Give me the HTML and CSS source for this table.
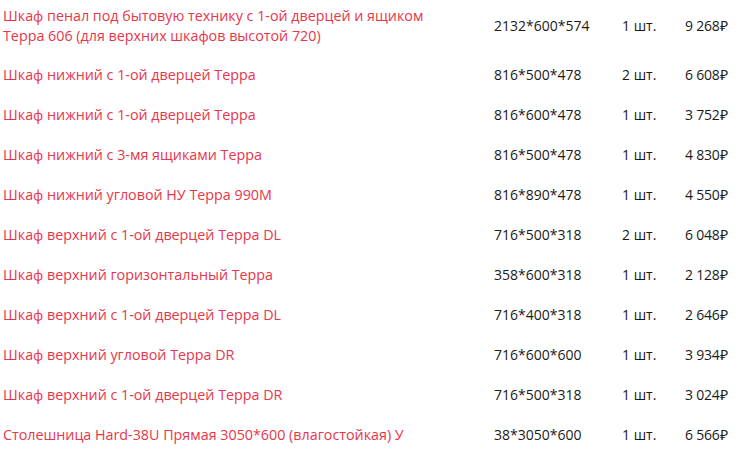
FILE: index.html
```html
<!DOCTYPE html>
<html lang="ru">
<head>
<meta charset="utf-8">
<link rel="stylesheet" href="styles.css">
</head>
<body>
<div class="list">
  <div class="row first">
    <div class="name">Шкаф пенал под бытовую технику с 1-ой дверцей и ящиком Терра 606 (для верхних шкафов высотой 720)</div>
    <div class="dims">2132*600*574</div><div class="qty">1 шт.</div><div class="price">9 268₽</div>
  </div>
  <div class="row">
    <div class="name">Шкаф нижний с 1-ой дверцей Терра</div>
    <div class="dims">816*500*478</div><div class="qty">2 шт.</div><div class="price">6 608₽</div>
  </div>
  <div class="row">
    <div class="name">Шкаф нижний с 1-ой дверцей Терра</div>
    <div class="dims">816*600*478</div><div class="qty">1 шт.</div><div class="price">3 752₽</div>
  </div>
  <div class="row">
    <div class="name">Шкаф нижний с 3-мя ящиками Терра</div>
    <div class="dims">816*500*478</div><div class="qty">1 шт.</div><div class="price">4 830₽</div>
  </div>
  <div class="row">
    <div class="name">Шкаф нижний угловой НУ Терра 990М</div>
    <div class="dims">816*890*478</div><div class="qty">1 шт.</div><div class="price">4 550₽</div>
  </div>
  <div class="row">
    <div class="name">Шкаф верхний с 1-ой дверцей Терра DL</div>
    <div class="dims">716*500*318</div><div class="qty">2 шт.</div><div class="price">6 048₽</div>
  </div>
  <div class="row">
    <div class="name">Шкаф верхний горизонтальный Терра</div>
    <div class="dims">358*600*318</div><div class="qty">1 шт.</div><div class="price">2 128₽</div>
  </div>
  <div class="row">
    <div class="name">Шкаф верхний с 1-ой дверцей Терра DL</div>
    <div class="dims">716*400*318</div><div class="qty">1 шт.</div><div class="price">2 646₽</div>
  </div>
  <div class="row">
    <div class="name">Шкаф верхний угловой Терра DR</div>
    <div class="dims">716*600*600</div><div class="qty">1 шт.</div><div class="price">3 934₽</div>
  </div>
  <div class="row">
    <div class="name">Шкаф верхний с 1-ой дверцей Терра DR</div>
    <div class="dims">716*500*318</div><div class="qty">1 шт.</div><div class="price">3 024₽</div>
  </div>
  <div class="row">
    <div class="name">Столешница Hard-38U Прямая 3050*600 (влагостойкая) У</div>
    <div class="dims">38*3050*600</div><div class="qty">1 шт.</div><div class="price">6 566₽</div>
  </div>
</div>
</body>
</html>
```

FILE: styles.css
```css
html, body {
  margin: 0;
  padding: 0;
  background: #ffffff;
}
.list {
  padding-left: 3px;
}
.row {
  display: grid;
  grid-template-columns: 491px 128px 63px 60px;
  align-items: center;
  padding: 10px 0;
  line-height: 20px;
}
.row.first {
  padding-top: 6px;
  padding-bottom: 9px;
}
.name {
  font-family: "Open Sans", sans-serif;
  font-size: 14.3px;
  color: #e8354a;
  padding-right: 50px;
}
.dims, .qty, .price {
  font-family: "Open Sans", sans-serif;
  font-size: 14px;
  color: #1a1a1a;
}
.price {
  letter-spacing: -0.2px;
}
```
